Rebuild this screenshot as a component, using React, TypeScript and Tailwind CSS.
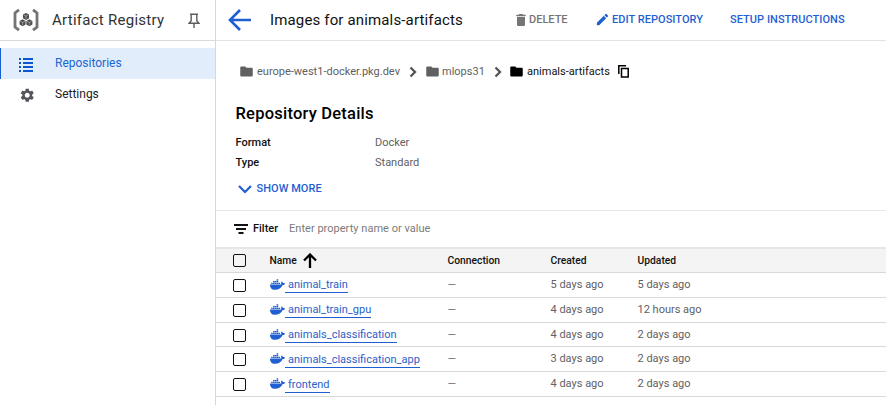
import React from "react";
import { MdDelete, MdEdit, MdFolder, MdSettings } from "react-icons/md";
import { FaDocker } from "react-icons/fa";

const rows = [
  { name: "animal_train", created: "5 days ago", updated: "5 days ago", h: "h-[25px]" },
  { name: "animal_train_gpu", created: "4 days ago", updated: "12 hours ago", h: "h-[25px]" },
  { name: "animals_classification", created: "4 days ago", updated: "2 days ago", h: "h-[24px] pt-px" },
  { name: "animals_classification_app", created: "3 days ago", updated: "2 days ago", h: "h-[25px] pt-px" },
  { name: "frontend", created: "4 days ago", updated: "2 days ago", h: "h-[25px] pt-px" },
];

const columns = "grid grid-cols-[53.5px_178px_103px_87px_1fr] items-center";

function Logo() {
  return (
    <svg width="28" height="24" viewBox="0 0 28 24" fill="none" className="shrink-0">
      <path d="M7 1.800 3 5v14l4 3.200M21 1.800 25 5v14l-4 3.200" stroke="#747474" strokeWidth="2.800" />
      {[[14, 8.4], [10.6, 14.8], [17.4, 14.8]].map(([x, y]) => (
        <g key={x} transform={`translate(${x} ${y})`}>
          <path d="M0-3.500 3-1.800V1.800L0 3.500-3 1.800V-1.800Z" fill="#4c4c4c" />
          <path d="M-2.200-1.500 0-.300l2.200-1.200M0-.300v2.800" stroke="#ccc" strokeWidth=".6" />
        </g>
      ))}
    </svg>
  );
}

function Chevron() {
  return (
    <svg width="8" height="12" viewBox="0 0 8 12" fill="none" className="shrink-0">
      <path d="m1.500 1.500 4.500 4.500-4.500 4.500" stroke="#555" strokeWidth="2.300" />
    </svg>
  );
}

function Checkbox() {
  return <span className="ml-[17px] block size-[13px] rounded-[2px] border-[1.5px] border-[#111]" />;
}

export default function App() {
  return (
    <div className="flex h-[405px] w-[886px] overflow-hidden bg-white font-['Roboto',sans-serif] text-[11px] whitespace-nowrap text-[#5f6062]">
      <aside className="w-[216px] shrink-0 border-r border-[#d5d7dc]">
        <header className="flex h-[41px] items-center border-b border-[#d9dadd] pl-[11.5px]">
          <Logo />
          <h1 className="ml-[12.500px] w-[136px] text-[15px] tracking-[0.26px] text-[#333]">Artifact Registry</h1>
          <svg width="12" height="16" viewBox="0 0 12 16" fill="none" stroke="#5c5d60" strokeWidth="1.400" className="mt-px">
            <path d="M2 1.200h8M3.200 1.200v6.500L1.200 10.200h9.600L8.800 7.700v-6.500M6 10.200V15" />
          </svg>
        </header>
        <nav className="pt-[7px] text-[12px] text-[#202124]">
          <a className="flex h-[31px] items-center border-l border-[#1a5fd0] bg-[#e1edfb] pl-[18px] text-[#1a66d2]">
            <svg width="14" height="14" viewBox="0 0 14 14" fill="#0b57d0" className="mt-[3px]">
              <path d="M0 0h2v2H0zM4 0h10v2H4zM0 4h2v2H0zM4 4h10v2H4zM0 8h2v2H0zM4 8h10v2H4zM0 12h2v2H0zM4 12h10v2H4z" />
            </svg>
            <span className="mb-px ml-[22px]">Repositories</span>
          </a>
          <a className="flex h-[31px] items-center pl-[19px]">
            <MdSettings className="mt-px size-[16.500px] text-[#55565b]" />
            <span className="mb-[2px] ml-[19.500px]">Settings</span>
          </a>
        </nav>
      </aside>
      <main className="min-w-0 flex-1">
        <header className="flex h-[41px] items-center border-b border-[#e3e3e5] pl-3 text-[11px] font-medium text-[#1f5fd2]">
          <svg width="23" height="22" viewBox="0 0 23 22" fill="none" stroke="#1f5fd2" strokeWidth="2.600">
            <path d="M12 1 2 11l10 10M2 11h21" />
          </svg>
          <h2 className="ml-[19px] w-[244px] text-[15px] tracking-[0.15px] font-normal text-[#111]">Images for animals-artifacts</h2>
          <span className="flex w-[81px] items-center text-[#757575]">
            <MdDelete className="-ml-px mr-0 mb-px size-[16px]" />DELETE
          </span>
          <span className="flex w-[135px] items-center tracking-[0.04px]">
            <MdEdit className="mr-[2px] mb-px size-[15px]" />EDIT REPOSITORY
          </span>
          <span className="tracking-[0.04px]">SETUP INSTRUCTIONS</span>
        </header>
        <section className="h-[170px] border-b border-[#e8e8ea]">
          <div className="flex h-[61px] items-center pl-6">
            <MdFolder className="-ml-px mb-px size-[15px]" />
            <span className="mt-px ml-[3px] w-[152px]">europe-west1-docker.pkg.dev</span>
            <Chevron />
            <MdFolder className="mb-px ml-[8px] size-[15px]" />
            <span className="mt-px ml-[2px] w-[52px]">mlops31</span>
            <Chevron />
            <MdFolder className="mb-px ml-[7px] size-[15px] text-black" />
            <span className="mt-px ml-[3px] w-[91px] text-[#111]">animals-artifacts</span>
            <svg width="12" height="13" viewBox="0 0 12 13" fill="none" stroke="#000" strokeWidth="1.500">
              <path d="M.8 9V.8H8M3.500 3.500h6.700v8.500H3.500Z" />
            </svg>
          </div>
          <div className="pl-[19.500px]">
            <h3 className="h-[31px] pt-px text-[16.500px] leading-[22px] font-medium tracking-[0.22px] text-black">Repository Details</h3>
            <dl className="grid grid-cols-[139.500px_1fr] leading-5">
              <dt className="font-medium text-[#111]">Format</dt><dd>Docker</dd>
              <dt className="font-medium text-[#111]">Type</dt><dd>Standard</dd>
            </dl>
            <div className="mt-[6px] flex h-5 items-center pl-[2px] font-medium text-[#1f5fd2]">
              <svg width="14" height="9" viewBox="0 0 14 9" fill="none" stroke="#1f5fd2" strokeWidth="2.200">
                <path d="m1 1 6 6 6-6" />
              </svg>
              <span className="ml-[5px] tracking-[0.04px]">SHOW MORE</span>
            </div>
          </div>
        </section>
        <div className="flex h-[36px] items-center pl-[18px]">
          <svg width="14" height="10" viewBox="0 0 14 10" fill="#111">
            <path d="M0 0h14v2H0zM2 4h10v2H2zM4.500 8h5v2h-5z" />
          </svg>
          <span className="ml-[5px] w-[36px] font-medium text-[#111]">Filter</span>
          <span className="tracking-[0.03px] text-[#7b7b7b]">Enter property name or value</span>
        </div>
        <div className={`${columns} h-[26px] border-t-2 border-b border-t-[#e6e6e6] border-b-[#d9d9dc] bg-[#f4f4f4] text-[10.3px] font-medium text-[#111]`}>
          <Checkbox />
          <span className="flex items-center">
            Name
            <svg width="14" height="15" viewBox="0 0 14 15" fill="none" stroke="#000" strokeWidth="2.300" className="mb-px ml-[6px]">
              <path d="m1 7.500 6-6 6 6M7 1.500V15" />
            </svg>
          </span>
          <span>Connection</span><span>Created</span><span>Updated</span>
        </div>
        {rows.map((row) => (
          <div key={row.name} className={`${columns} ${row.h} border-b border-[#d9d9dc]`}>
            <Checkbox />
            <span className="flex items-center text-[#2a62c9]">
              <FaDocker className="mb-[2px] size-[15px] text-[#1f5fd2]" />
              <span className="ml-[0.5px] border-b border-[#1f5fd2] pl-[3px] leading-[15px]">{row.name}</span>
            </span>
            <span className="text-[#777]">—</span>
            <span>{row.created}</span>
            <span>{row.updated}</span>
          </div>
        ))}
      </main>
    </div>
  );
}
